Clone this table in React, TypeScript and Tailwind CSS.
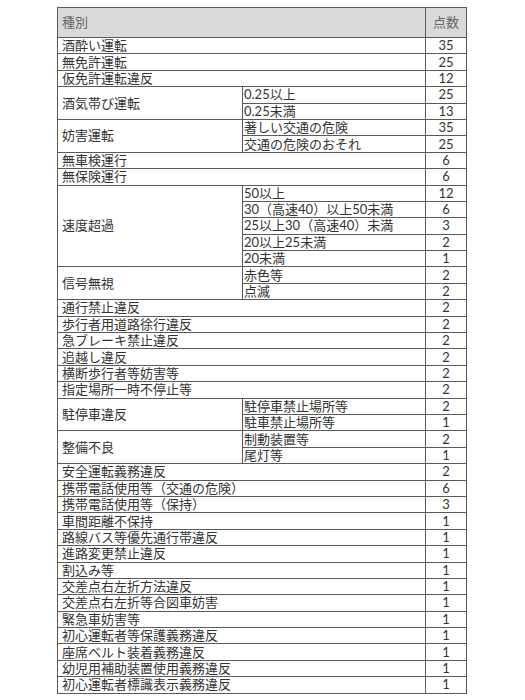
type Sub = { label: string; points: number };
type Row = { name: string; points?: number; subs?: Sub[] };

const rows: Row[] = [
  { name: "酒酔い運転", points: 35 },
  { name: "無免許運転", points: 25 },
  { name: "仮免許運転違反", points: 12 },
  {
    name: "酒気帯び運転",
    subs: [
      { label: "0.25以上", points: 25 },
      { label: "0.25未満", points: 13 },
    ],
  },
  {
    name: "妨害運転",
    subs: [
      { label: "著しい交通の危険", points: 35 },
      { label: "交通の危険のおそれ", points: 25 },
    ],
  },
  { name: "無車検運行", points: 6 },
  { name: "無保険運行", points: 6 },
  {
    name: "速度超過",
    subs: [
      { label: "50以上", points: 12 },
      { label: "30（高速40）以上50未満", points: 6 },
      { label: "25以上30（高速40）未満", points: 3 },
      { label: "20以上25未満", points: 2 },
      { label: "20未満", points: 1 },
    ],
  },
  {
    name: "信号無視",
    subs: [
      { label: "赤色等", points: 2 },
      { label: "点滅", points: 2 },
    ],
  },
  { name: "通行禁止違反", points: 2 },
  { name: "歩行者用道路徐行違反", points: 2 },
  { name: "急ブレーキ禁止違反", points: 2 },
  { name: "追越し違反", points: 2 },
  { name: "横断歩行者等妨害等", points: 2 },
  { name: "指定場所一時不停止等", points: 2 },
  {
    name: "駐停車違反",
    subs: [
      { label: "駐停車禁止場所等", points: 2 },
      { label: "駐車禁止場所等", points: 1 },
    ],
  },
  {
    name: "整備不良",
    subs: [
      { label: "制動装置等", points: 2 },
      { label: "尾灯等", points: 1 },
    ],
  },
  { name: "安全運転義務違反", points: 2 },
  { name: "携帯電話使用等（交通の危険）", points: 6 },
  { name: "携帯電話使用等（保持）", points: 3 },
  { name: "車間距離不保持", points: 1 },
  { name: "路線バス等優先通行帯違反", points: 1 },
  { name: "進路変更禁止違反", points: 1 },
  { name: "割込み等", points: 1 },
  { name: "交差点右左折方法違反", points: 1 },
  { name: "交差点右左折等合図車妨害", points: 1 },
  { name: "緊急車妨害等", points: 1 },
  { name: "初心運転者等保護義務違反", points: 1 },
  { name: "座席ベルト装着義務違反", points: 1 },
  { name: "幼児用補助装置使用義務違反", points: 1 },
  { name: "初心運転者標識表示義務違反", points: 1 },
];

const cell = "border border-[#5a5a5a] p-0 leading-[15px] align-middle";

export default function App() {
  return (
    <div className="min-h-screen bg-white pt-[7px] pl-[57px] font-['Lato','Noto_Sans_CJK_JP',sans-serif] text-[13px] text-[#333]">
      <table className="border-collapse table-fixed w-[409px]">
        <colgroup>
          <col className="w-[185px]" />
          <col className="w-[183px]" />
          <col className="w-[41px]" />
        </colgroup>
        <thead>
          <tr className="h-[30px] bg-[#d9d9d9] text-[#666]">
            <th colSpan={2} className={`${cell} pl-[4px] text-left font-normal`}>
              種別
            </th>
            <th className={`${cell} text-center font-normal`}>点数</th>
          </tr>
        </thead>
        <tbody>
          {rows.map((row) =>
            row.subs ? (
              row.subs.map((sub, i) => (
                <tr key={row.name + sub.label} className="h-[16.4px]">
                  {i === 0 && (
                    <td rowSpan={row.subs!.length} className={`${cell} pl-[4px]`}>
                      {row.name}
                    </td>
                  )}
                  <td className={`${cell} pl-[1px] whitespace-nowrap`}>{sub.label}</td>
                  <td className={`${cell} text-center`}>{sub.points}</td>
                </tr>
              ))
            ) : (
              <tr key={row.name} className="h-[16.4px]">
                <td colSpan={2} className={`${cell} pl-[4px] whitespace-nowrap`}>
                  {row.name}
                </td>
                <td className={`${cell} text-center`}>{row.points}</td>
              </tr>
            )
          )}
        </tbody>
      </table>
    </div>
  );
}
